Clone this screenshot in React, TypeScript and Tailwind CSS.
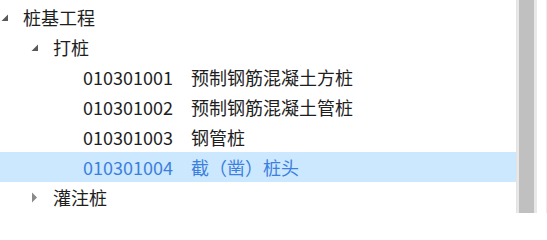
import { ReactNode } from "react";

interface Row {
  level: number;
  toggle?: "open" | "closed";
  code?: string;
  label: string;
  selected?: boolean;
}

const ROWS: Row[] = [
  { level: 0, toggle: "open", label: "桩基工程" },
  { level: 1, toggle: "open", label: "打桩" },
  { level: 2, code: "010301001", label: "预制钢筋混凝土方桩" },
  { level: 2, code: "010301002", label: "预制钢筋混凝土管桩" },
  { level: 2, code: "010301003", label: "钢管桩" },
  { level: 2, code: "010301004", label: "截（凿）桩头", selected: true },
  { level: 1, toggle: "closed", label: "灌注桩" },
];

function Toggle({ kind }: { kind?: "open" | "closed" }): ReactNode {
  if (kind === "open")
    return (
      <svg width="8" height="8" viewBox="0 0 8 8" className="mt-[1px]">
        <path d="M7 0.5 L7 7 L0.5 7 Z" fill="#595959" />
      </svg>
    );
  if (kind === "closed")
    return (
      <svg width="8" height="11" viewBox="0 0 8 11">
        <path d="M1 0.5 L6 5.5 L1 10.5 Z" fill="#8a8a8a" />
      </svg>
    );
  return null;
}

export default function App() {
  return (
    <div className="flex h-[213px] w-[547px] overflow-hidden bg-white font-['Noto_Sans_CJK_SC','Noto_Sans',sans-serif] text-[18px] text-[#1e1e1e]">
      <div className="flex w-[516px] flex-col pt-[2px]">
        {ROWS.map((r, i) => (
          <div
            key={i}
            className={`flex h-[30px] items-center ${r.selected ? "bg-[#cce8ff] text-[#3c7fdc]" : ""}`}
            style={{ paddingLeft: r.level * 30 }}
          >
            <span className="flex w-[23px] shrink-0 items-center pl-[1px]">
              <Toggle kind={r.toggle} />
            </span>
            {r.code && <span className="w-[108px] shrink-0">{r.code}</span>}
            <span className="whitespace-nowrap leading-none">{r.label}</span>
          </div>
        ))}
      </div>
      <div className="flex w-[21px] border-l border-[#e3e3e3] bg-[#e8e8e8] px-[2px]">
        <div className="w-[15px] bg-[#c0c0c0]" />
      </div>
      <div className="w-[10px] border-r border-[#ececec]" />
    </div>
  );
}
